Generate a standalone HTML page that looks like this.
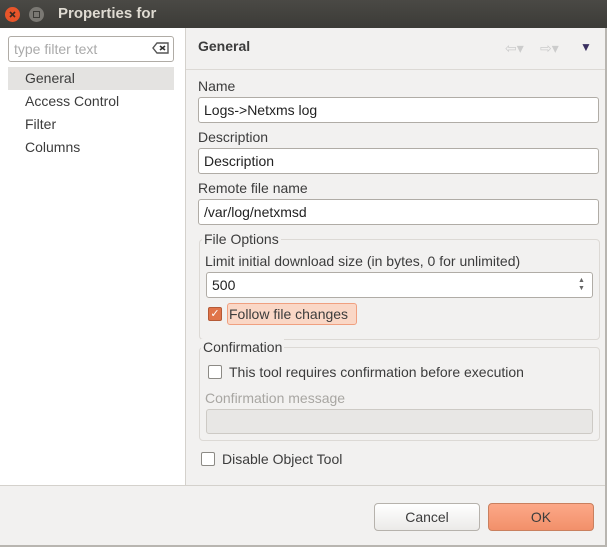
<!DOCTYPE html>
<html><head><style>
body{margin:0;width:607px;height:547px;overflow:hidden;background:#f2f1f0;font-family:"Liberation Sans",sans-serif;font-size:14px;color:#3c3c3c;position:relative}
.a{position:absolute}
.tb{left:0;top:0;width:607px;height:28px;background:linear-gradient(#4a4945,#3c3b37);}
.in{position:absolute;background:#fff;border:1px solid #b0aca6;border-radius:3px;box-sizing:border-box;padding-left:5px;line-height:24px;height:26px;color:#222}
.lab{position:absolute;color:#3c3c3c}
.grp{position:absolute;border:1px solid #dcd9d5;border-radius:4px}
.cb{position:absolute;width:12px;height:12px;border:1px solid #8c8a85;border-radius:2px;background:#fff}
</style></head><body>
<div class="a tb"></div>
<div class="a" style="left:5px;top:7px;width:15px;height:15px;border-radius:50%;background:#e8552a"></div>
<svg class="a" style="left:5px;top:7px" width="15" height="15"><path d="M5 5L10 10M10 5L5 10" stroke="#3c2a20" stroke-width="1.6"/></svg>
<div class="a" style="left:29px;top:7px;width:15px;height:15px;border-radius:50%;background:#7a7873"></div>
<div class="a" style="left:33px;top:11px;width:5px;height:5px;border:1px solid #3c3b37"></div>
<div class="a" style="left:58px;top:5px;color:#dfdbd2;font-weight:bold;font-size:15px">Properties for</div>
<div class="a" style="left:0;top:28px;width:185px;height:457px;background:#fff;border-right:1px solid #d4d1cc"></div>
<div class="in" style="left:8px;top:36px;width:166px;height:26px;color:#aaa">type filter text</div>
<svg class="a" style="left:152px;top:42px" width="17" height="12"><path d="M5 1H16V11H5L1 6Z" fill="none" stroke="#555" stroke-width="1.4"/><path d="M8 4L13 8M13 4L8 8" stroke="#333" stroke-width="1.6"/></svg>
<div class="a" style="left:8px;top:67px;width:166px;height:23px;background:#e4e3e1"></div>
<div class="lab" style="left:25px;top:70px">General</div>
<div class="lab" style="left:25px;top:93px">Access Control</div>
<div class="lab" style="left:25px;top:116px">Filter</div>
<div class="lab" style="left:25px;top:139px">Columns</div>
<div class="lab" style="left:198px;top:38px;font-weight:bold">General</div>
<div class="a" style="left:505px;top:40px;color:#ccc;font-size:14px">⇦▾</div>
<div class="a" style="left:540px;top:40px;color:#ccc;font-size:14px">⇨▾</div>
<div class="a" style="left:580px;top:40px;color:#3a3060;font-size:12px">▼</div>
<div class="a" style="left:186px;top:69px;width:421px;height:1px;background:#dcd9d5"></div>
<div class="lab" style="left:198px;top:78px">Name</div>
<div class="in" style="left:198px;top:97px;width:401px">Logs-&gt;Netxms log</div>
<div class="lab" style="left:198px;top:129px">Description</div>
<div class="in" style="left:198px;top:148px;width:401px">Description</div>
<div class="lab" style="left:198px;top:180px">Remote file name</div>
<div class="in" style="left:198px;top:199px;width:401px">/var/log/netxmsd</div>
<div class="grp" style="left:199px;top:239px;width:399px;height:99px"></div>
<div class="lab" style="left:202px;top:231px;background:#f2f1f0;padding:0 2px">File Options</div>
<div class="lab" style="left:205px;top:253px">Limit initial download size (in bytes, 0 for unlimited)</div>
<div class="in" style="left:206px;top:272px;width:387px">500</div>
<div class="a" style="left:578px;top:277px;font-size:7px;color:#666;line-height:8px">▲<br>▼</div>
<div class="cb" style="left:208px;top:307px;background:#e0744a;border-color:#b55a36;color:#fff;font-size:11px;line-height:12px;text-align:center">✓</div>
<div class="a" style="left:227px;top:303px;width:128px;height:20px;background:#fad7c6;border:1px solid #f0a080;border-radius:3px"></div>
<div class="lab" style="left:229px;top:306px">Follow file changes</div>
<div class="grp" style="left:199px;top:347px;width:399px;height:92px"></div>
<div class="lab" style="left:201px;top:339px;background:#f2f1f0;padding:0 2px">Confirmation</div>
<div class="cb" style="left:208px;top:365px"></div>
<div class="lab" style="left:229px;top:364px">This tool requires confirmation before execution</div>
<div class="lab" style="left:205px;top:390px;color:#a8a6a2">Confirmation message</div>
<div class="a" style="left:206px;top:409px;width:387px;height:25px;background:#e8e7e5;border:1px solid #cdcac5;border-radius:3px;box-sizing:border-box"></div>
<div class="cb" style="left:201px;top:452px"></div>
<div class="lab" style="left:222px;top:451px">Disable Object Tool</div>
<div class="a" style="left:0;top:485px;width:607px;height:1px;background:#d4d1cc"></div>
<div class="a" style="left:374px;top:503px;width:104px;height:26px;border:1px solid #b6b2ac;border-radius:4px;background:linear-gradient(#fff,#ebeae8);text-align:center;line-height:26px">Cancel</div>
<div class="a" style="left:488px;top:503px;width:104px;height:26px;border:1px solid #c9805f;border-radius:4px;background:linear-gradient(#fca888,#f2906a);text-align:center;line-height:26px">OK</div>
<div class="a" style="left:605px;top:28px;width:2px;height:519px;background:#b8b5b0"></div>
<div class="a" style="left:0;top:545px;width:607px;height:2px;background:#b8b5b0"></div>
</body></html>
